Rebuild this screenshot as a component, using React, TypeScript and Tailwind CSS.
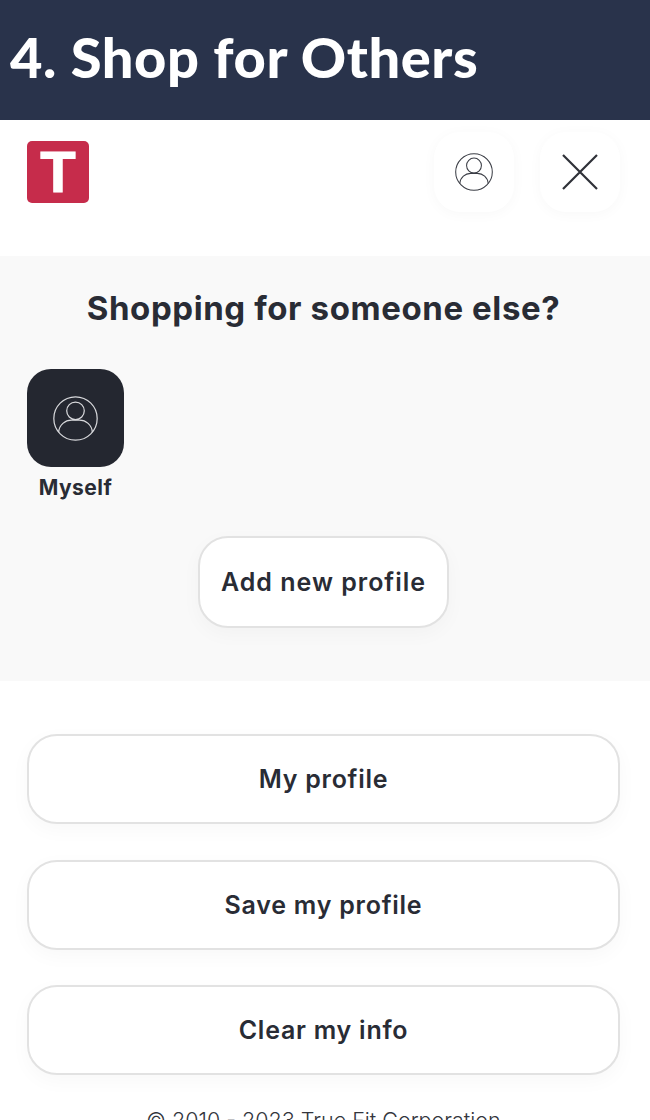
const BODY_FONT = "font-['Inter',sans-serif]";

function ProfileIcon({ className }: { className: string }) {
  return (
    <svg viewBox="0 0 44 44" fill="none" stroke="currentColor" strokeWidth="1.2" className={className}>
      <circle cx="22" cy="22" r="21.2" />
      <circle cx="22" cy="14.5" r="8.6" />
      <path d="M5.5 35.5 C6 28 12 23.6 18 23.6 L26 23.6 C32 23.6 38 28 38.5 35.5" />
    </svg>
  );
}

function ActionButton({ label }: { label: string }) {
  return (
    <button className="flex h-[90px] w-full items-center justify-center rounded-[30px] border-2 border-[#e2e2e2] bg-white pt-[2px] text-[25px] font-semibold tracking-[0.75px] text-[#292c35] shadow-[0_6px_20px_rgba(0,0,0,0.03)]">
      {label}
    </button>
  );
}

export default function App() {
  return (
    <div className={`h-[1120px] w-[650px] overflow-hidden bg-white ${BODY_FONT}`}>
      <header className="flex h-[120px] items-center bg-[#29334b] pb-[7px] pl-[10px]">
        <h1 className="font-['Lato',sans-serif] text-[56px] leading-none font-black tracking-[0.55px] text-white">
          4. Shop for Others
        </h1>
      </header>

      {/* Top bar */}
      <div className="flex h-[136px] items-start justify-between pt-3 pr-[30px] pl-[27px]">
        <div className="mt-[9px] flex h-[62px] w-[62px] items-center justify-center rounded-[5px] bg-[#c62c4b]">
          <span className="font-['Liberation_Sans',sans-serif] text-[58px] leading-none font-bold text-white [-webkit-text-stroke:1px_white]">T</span>
        </div>
        <div className="flex gap-[26px]">
          <button className="flex h-[80px] w-[80px] items-center justify-center rounded-[26px] bg-white text-[#3a3d45] shadow-[0_2px_14px_rgba(0,0,0,0.03)]">
            <ProfileIcon className="h-[38px] w-[38px]" />
          </button>
          <button className="flex h-[80px] w-[80px] items-center justify-center rounded-[26px] bg-white text-[#2f3138] shadow-[0_2px_14px_rgba(0,0,0,0.03)]">
            <svg viewBox="0 0 36 36" stroke="currentColor" strokeWidth="2.2" className="h-[36px] w-[36px]">
              <path d="M1 1 L35 35 M35 1 L1 35" />
            </svg>
          </button>
        </div>
      </div>

      {/* Shopping for section */}
      <section className="flex h-[425px] flex-col bg-[#f9f9f9] pr-[30px] pl-[27px]">
        <h2 className="mt-[30px] text-center text-[33px] leading-[44px] font-bold tracking-[0.6px] text-[#292c35]">
          Shopping for someone else?
        </h2>
        <div className="mt-[39px] flex w-[97px] flex-col items-center">
          <div className="flex h-[98px] w-[97px] items-center justify-center rounded-[24px] bg-[#242730] text-[#d8d9dc]">
            <ProfileIcon className="h-[45px] w-[45px]" />
          </div>
          <span className="mt-[6px] text-[21px] leading-[30px] font-bold tracking-[0.5px] text-[#292c35]">Myself</span>
        </div>
        <button className="mx-auto mt-[33px] flex h-[92px] w-[251px] items-center justify-center rounded-[30px] border-2 border-[#e2e2e2] bg-white pt-[1px] text-[25px] font-semibold tracking-[1px] text-[#292c35] shadow-[0_6px_20px_rgba(0,0,0,0.03)]">
          Add new profile
        </button>
      </section>

      {/* Account actions */}
      <div className="flex flex-col gap-[35.5px] pt-[53px] pr-[30px] pl-[27px]">
        <ActionButton label="My profile" />
        <ActionButton label="Save my profile" />
        <ActionButton label="Clear my info" />
      </div>

      <p className="mt-[30px] pr-[3px] text-center text-[21.5px] leading-[30px] font-light text-[#33363d]">
        © 2010 - 2023 True Fit Corporation
      </p>
    </div>
  );
}
